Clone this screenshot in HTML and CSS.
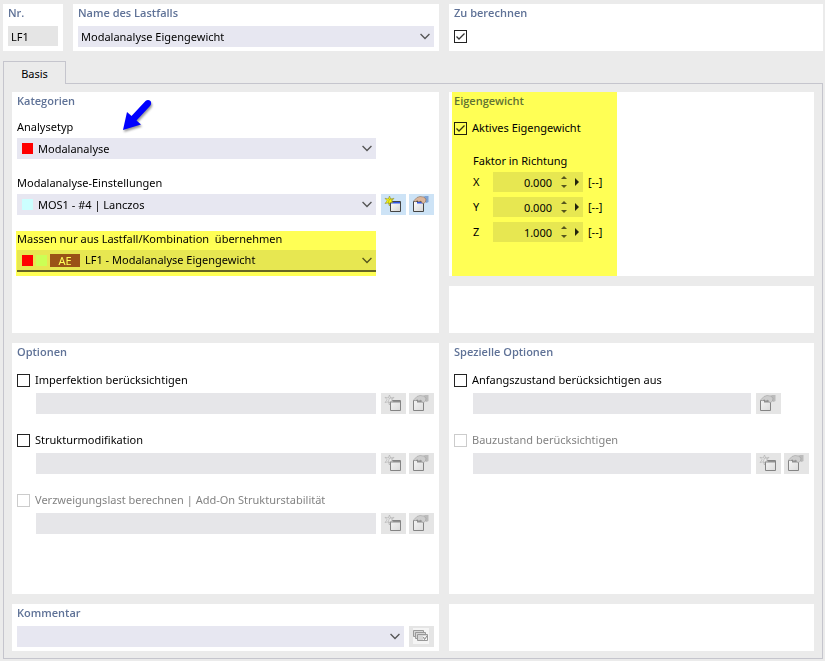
FILE: index.html
```html
<!DOCTYPE html>
<html lang="de">
<head>
    <meta charset="UTF-8">
    <meta name="viewport" content="width=device-width, initial-scale=1.0">
    <title>Lastfall</title>
    <link rel="stylesheet" href="styles.css">
</head>
<body>
    <!-- Shared icons -->
    <svg class="sprite" aria-hidden="true">
        <defs>
            <linearGradient id="pane" x1="0" y1="0" x2="1" y2="1">
                <stop offset="0" stop-color="#fff"/>
                <stop offset="1" stop-color="#d4d4d4"/>
            </linearGradient>
            <symbol id="chevron" viewBox="0 0 9 6">
                <path d="M.5 .8 4.5 4.8 8.5 .8" fill="none" stroke="#555" stroke-width="1.2"/>
            </symbol>
            <symbol id="new" viewBox="0 0 25 21">
                <path class="star" d="M8.500 2 9.700 5 13 4.300 10.800 6.800 13 9.500 9.700 8.800 8.500 12 7.300 8.800 4 9.500 6.200 6.800 4 4.300 7.300 5z"/>
                <path class="window" d="M9.500 7.500h10v10h-10z"/>
                <path class="bar" d="M10 8h9v1.500h-9z"/>
                <path class="star" d="M8.500 5 11.500 5.500 10.500 7 12 8.500 9.500 8.500 8.500 10 7.500 8z" stroke="none"/>
            </symbol>
            <symbol id="edit" viewBox="0 0 25 21">
                <path class="window" d="M4.500 7.500h10v10h-10z"/>
                <path class="bar" d="M8 8h6v1.500H8z"/>
                <path class="cuff" d="M14 3 16 2h3.500v6l-2 1-3-2z"/>
                <path class="hand" d="M5 6.500 8 3.500 11 2.500 14.500 3 17 5 16.500 8 14.500 9.500 13 9 12 7 9.500 8 8.500 6.500 6 8z"/>
            </symbol>
        </defs>
    </svg>

    <header>
        <section class="panel">
            <h2><label for="nr">Nr.</label></h2>
            <input type="text" id="nr" class="field" value="LF1" readonly>
        </section>
        <section class="panel">
            <h2><label for="name">Name des Lastfalls</label></h2>
            <div class="combo">
                <select id="name"><option>Modalanalyse Eigengewicht</option></select>
                <svg class="chevron"><use href="#chevron"/></svg>
            </div>
        </section>
        <section class="panel">
            <h2><label for="calc">Zu berechnen</label></h2>
            <div class="check calc"><input type="checkbox" id="calc" checked></div>
        </section>
    </header>

    <nav><button type="button" class="tab">Basis</button></nav>

    <main>
        <section class="panel categories">
            <h2>Kategorien</h2>
            <svg class="arrow" viewBox="0 0 36 40" aria-hidden="true">
                <path d="M3 34 7 16 11.500 20 25.500 5Q28 3 30.500 5 32 7.500 30 10L16.500 24.500 21 28.500z"/>
            </svg>
            <div class="group">
                <label for="type">Analysetyp</label>
                <div class="row spare">
                    <div class="combo">
                        <span class="swatch red"></span>
                        <select id="type"><option>Modalanalyse</option></select>
                        <svg class="chevron"><use href="#chevron"/></svg>
                    </div>
                </div>
            </div>
            <div class="group">
                <label for="settings">Modalanalyse-Einstellungen</label>
                <div class="row">
                    <div class="combo">
                        <span class="swatch cyan"></span>
                        <select id="settings"><option>MOS1 - #4 | Lanczos</option></select>
                        <svg class="chevron"><use href="#chevron"/></svg>
                    </div>
                    <button type="button" class="tool" aria-label="Neu"><svg><use href="#new"/></svg></button>
                    <button type="button" class="tool" aria-label="Bearbeiten"><svg><use href="#edit"/></svg></button>
                </div>
            </div>
            <div class="group spare marked">
                <label for="masses">Massen nur aus Lastfall/Kombination&nbsp; übernehmen</label>
                <div class="combo focused">
                    <span class="swatch red"></span>
                    <span class="swatch cyan"></span>
                    <span class="tag">AE</span>
                    <select id="masses"><option>LF1 - Modalanalyse Eigengewicht</option></select>
                    <svg class="chevron"><use href="#chevron"/></svg>
                </div>
            </div>
        </section>

        <div class="column">
            <section class="panel weight">
                <h2>Eigengewicht</h2>
                <div class="check">
                    <input type="checkbox" id="active" checked>
                    <label for="active">Aktives Eigengewicht</label>
                </div>
                <div class="factors">
                    <p>Faktor in Richtung</p>
                    <div class="factor">
                        <label for="fx">X</label>
                        <div class="spin">
                            <input type="text" id="fx" value="0.000">
                            <span class="steps"><button type="button" class="up" aria-label="X erhöhen"></button><button type="button" class="down" aria-label="X verringern"></button></span>
                            <button type="button" class="more" aria-label="X Auswahl"></button>
                        </div>
                        <span>[--]</span>
                    </div>
                    <div class="factor">
                        <label for="fy">Y</label>
                        <div class="spin">
                            <input type="text" id="fy" value="0.000">
                            <span class="steps"><button type="button" class="up" aria-label="Y erhöhen"></button><button type="button" class="down" aria-label="Y verringern"></button></span>
                            <button type="button" class="more" aria-label="Y Auswahl"></button>
                        </div>
                        <span>[--]</span>
                    </div>
                    <div class="factor">
                        <label for="fz">Z</label>
                        <div class="spin">
                            <input type="text" id="fz" value="1.000">
                            <span class="steps"><button type="button" class="up" aria-label="Z erhöhen"></button><button type="button" class="down" aria-label="Z verringern"></button></span>
                            <button type="button" class="more" aria-label="Z Auswahl"></button>
                        </div>
                        <span>[--]</span>
                    </div>
                </div>
            </section>
            <section class="panel"></section>
        </div>

        <section class="panel options">
            <h2>Optionen</h2>
            <div class="option">
                <div class="check">
                    <input type="checkbox" id="imperfection">
                    <label for="imperfection">Imperfektion berücksichtigen</label>
                </div>
                <div class="row">
                    <div class="combo"><select aria-label="Imperfektion" disabled></select></div>
                    <button type="button" class="tool" aria-label="Neu" disabled><svg><use href="#new"/></svg></button>
                    <button type="button" class="tool" aria-label="Bearbeiten" disabled><svg><use href="#edit"/></svg></button>
                </div>
            </div>
            <div class="option">
                <div class="check">
                    <input type="checkbox" id="structure">
                    <label for="structure">Strukturmodifikation</label>
                </div>
                <div class="row">
                    <div class="combo"><select aria-label="Strukturmodifikation" disabled></select></div>
                    <button type="button" class="tool" aria-label="Neu" disabled><svg><use href="#new"/></svg></button>
                    <button type="button" class="tool" aria-label="Bearbeiten" disabled><svg><use href="#edit"/></svg></button>
                </div>
            </div>
            <div class="option">
                <div class="check">
                    <input type="checkbox" id="buckling" disabled>
                    <label for="buckling">Verzweigungslast berechnen | Add-On Strukturstabilität</label>
                </div>
                <div class="row">
                    <div class="combo"><select aria-label="Verzweigungslast" disabled></select></div>
                    <button type="button" class="tool" aria-label="Neu" disabled><svg><use href="#new"/></svg></button>
                    <button type="button" class="tool" aria-label="Bearbeiten" disabled><svg><use href="#edit"/></svg></button>
                </div>
            </div>
        </section>

        <section class="panel options">
            <h2>Spezielle Optionen</h2>
            <div class="option">
                <div class="check">
                    <input type="checkbox" id="initial">
                    <label for="initial">Anfangszustand berücksichtigen aus</label>
                </div>
                <div class="row short">
                    <div class="combo"><select aria-label="Anfangszustand" disabled></select></div>
                    <button type="button" class="tool" aria-label="Bearbeiten" disabled><svg><use href="#edit"/></svg></button>
                </div>
            </div>
            <div class="option">
                <div class="check">
                    <input type="checkbox" id="stage" disabled>
                    <label for="stage">Bauzustand berücksichtigen</label>
                </div>
                <div class="row">
                    <div class="combo"><select aria-label="Bauzustand" disabled></select></div>
                    <button type="button" class="tool" aria-label="Neu" disabled><svg><use href="#new"/></svg></button>
                    <button type="button" class="tool" aria-label="Bearbeiten" disabled><svg><use href="#edit"/></svg></button>
                </div>
            </div>
        </section>

        <section class="panel">
            <h2><label for="comment">Kommentar</label></h2>
            <div class="row">
                <div class="combo">
                    <select id="comment"><option></option></select>
                    <svg class="chevron"><use href="#chevron"/></svg>
                </div>
                <button type="button" class="tool" aria-label="Kommentare" disabled>
                    <svg viewBox="0 0 25 21">
                        <path d="M4 2h16v16H4z" fill="#fff"/>
                        <g fill="#ccc" stroke="#666">
                            <path d="M4.500 4.500h10v6h-10z"/>
                            <path d="M6.500 6.500h10v6h-10z"/>
                            <path d="M8.500 8.500h10v6h-10z"/>
                        </g>
                        <path d="M14 10h4v4h-4z" fill="#fff"/>
                        <path d="M14.500 11 15.500 13.500 18 10" fill="none" stroke="#444"/>
                    </svg>
                </button>
            </div>
        </section>
        <section class="panel"></section>
    </main>
</body>
</html>
```
FILE: styles.css
```css
:root {
    --page: #ebebeb;
    --field: #e7e7f1;
    --disabled: #e5e5e5;
    --heading: #5f7297;
    --line: #c5c5cd;
}

* {
    margin: 0;
    padding: 0;
    box-sizing: border-box;
}

body {
    display: flex;
    flex-direction: column;
    min-height: 100vh;
    padding: 4px 2px 2px 3px;
    background: var(--page);
    color: #000;
    font: 11px/16px "Noto Sans", "Open Sans", sans-serif;
}

input,
select,
button {
    border: none;
    border-radius: 0;
    background: none;
    color: inherit;
    font: inherit;
    appearance: none;
}

.sprite {
    position: absolute;
    width: 0;
    height: 0;
}

header {
    display: grid;
    grid-template-columns: 60px 366fr 374fr;
    gap: 10px;
}

.panel {
    min-width: 0;
    min-height: 47px;
    padding: 1px 5px 4px;
    background: #fff;
}

h2 {
    color: var(--heading);
    font-family: "Open Sans", "Noto Sans", sans-serif;
    font-size: 11px;
    font-weight: 600;
    line-height: 16px;
}

.field {
    display: block;
    width: 100%;
    height: 20px;
    margin-top: 5px;
    padding: 0 3px;
    background: var(--disabled);
}

h2 + .combo,
h2 + .row {
    margin-top: 5px;
}

/* Tabs */
nav {
    display: flex;
    margin-top: 10px;
}

.tab {
    position: relative;
    z-index: 1;
    width: 63px;
    height: 23px;
    margin-bottom: -1px;
    padding-top: 2px;
    border: 1px solid var(--line);
    border-bottom: none;
    background: var(--page);
}

main {
    display: grid;
    flex: 1;
    grid-template-columns: 427fr 365fr;
    grid-template-rows: minmax(241px, auto) 1fr auto;
    gap: 10px;
    padding: 8px 8px 7px;
    border: 1px solid var(--line);
}

.column {
    display: flex;
    flex-direction: column;
    gap: 10px;
}

/* Drop-downs */
.combo {
    display: flex;
    position: relative;
    flex: 1;
    align-items: center;
    gap: 3px;
    height: 21px;
    background: var(--field);
}

.combo select {
    flex: 1;
    min-width: 0;
    height: 21px;
    padding: 0 20px 0 3px;
}

.swatch ~ select {
    padding-left: 2px;
}

.combo select:disabled {
    background: var(--disabled);
}

.chevron {
    position: absolute;
    top: 7px;
    right: 4px;
    width: 10px;
    height: 7px;
    pointer-events: none;
}

.swatch {
    width: 11px;
    height: 11px;
}

.swatch:first-child {
    margin-left: 5px;
}

.red {
    background: #f00;
}

.cyan {
    background: #cff;
}

.tag {
    width: 30px;
    height: 13px;
    background: #9a5245;
    color: #fff;
    line-height: 13px;
    text-align: center;
}

.row {
    display: flex;
    gap: 3px;
}

.row .combo {
    margin-right: 2px;
}

.spare {
    margin-right: 58px;
}

.row.spare .combo {
    margin-right: 0;
}

.short {
    padding-right: 28px;
}

.tool {
    width: 25px;
    height: 21px;
    background: #cde3f6;
}

.tool svg {
    display: block;
    width: 25px;
    height: 21px;
}

.window { fill: url(#pane); stroke: #444; }
.bar { fill: #2f55e8; }
.star { fill: #ff0; stroke: #8a8a3a; stroke-width: 0.6; }
.cuff { fill: #7fa3d4; }
.hand { fill: #dcb69c; stroke: #85705f; stroke-width: 0.6; }

.tool:disabled {
    background: var(--disabled);
}

.tool:disabled svg {
    filter: grayscale(1) opacity(0.6);
}

.tool:disabled .star {
    fill: #eee;
    stroke: #555;
}

/* Categories */
.categories {
    position: relative;
}

.group {
    margin-bottom: 16px;
}

h2 ~ .group:nth-of-type(1) {
    margin-top: 10px;
}

.group > label {
    display: block;
    margin-bottom: 3px;
}

.marked {
    position: relative;
}

.focused {
    height: 22px;
    border-bottom: 2px solid #666;
}

/* Yellow highlighter */
.marked::after,
.weight::after {
    content: "";
    position: absolute;
    background: #ffff55;
    mix-blend-mode: multiply;
    pointer-events: none;
}

.marked::after {
    inset: 0 0 -4px -1px;
}

.weight::after {
    top: 0;
    bottom: 0;
    left: 3px;
    width: 165px;
}

.arrow {
    position: absolute;
    top: 4px;
    left: 108px;
    width: 36px;
    height: 40px;
    fill: #00f;
    filter: drop-shadow(1px 2px 1px rgba(0, 0, 0, 0.4));
}

/* Check boxes */
.check {
    display: flex;
    align-items: center;
    gap: 5px;
}

.check input {
    width: 13px;
    height: 13px;
    border: 1px solid #222;
    background: #fff;
}

.check input:checked {
    background: #fff url("data:image/svg+xml,%3Csvg xmlns='http://www.w3.org/2000/svg' viewBox='0 0 11 11'%3E%3Cpath d='M1.500 5.500 4 8 9.500 2.500' fill='none' stroke='%23333' stroke-width='1.300'/%3E%3C/svg%3E");
}

.check input:disabled {
    border-color: #ccc;
}

.check input:disabled + label {
    color: #838383;
}

.calc {
    margin-top: 9px;
}

/* Self-weight */
.weight {
    position: relative;
    flex: 1;
}

.weight .check {
    margin-top: 11px;
}

.factors {
    margin: 17px 0 0 19px;
}

.factors p {
    margin-bottom: 3px;
}

.factor {
    display: flex;
    align-items: center;
    gap: 5px;
    margin-bottom: 5px;
}

.factor label {
    width: 15px;
}

.spin {
    display: flex;
    align-items: center;
    width: 90px;
    height: 20px;
    background: var(--field);
}

.spin input {
    flex: 1;
    width: 0;
    height: 20px;
    text-align: right;
}

.steps {
    display: flex;
    flex-direction: column;
    gap: 6px;
    margin: 0 8px 0 9px;
}

.up,
.down {
    border: 3px solid transparent;
}

.up {
    border-top: none;
    border-bottom-color: #555;
}

.down {
    border-bottom: none;
    border-top-color: #555;
}

.more {
    margin-right: 4px;
    border: 4px solid transparent;
    border-right: none;
    border-left-color: #222;
}

/* Options */
.option {
    margin-top: 12px;
}

.option + .option {
    margin-top: 18px;
}

.option .row {
    margin: 5px 0 0 19px;
}
```
